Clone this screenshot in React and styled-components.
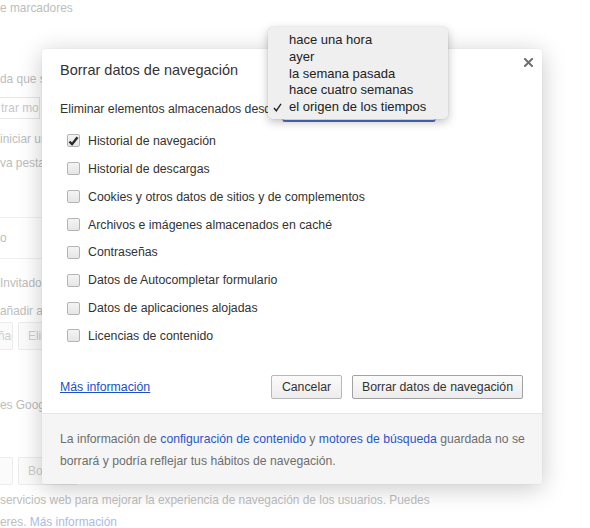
import React from "react";
import styled, { createGlobalStyle } from "styled-components";

const Global = createGlobalStyle`
  html, body { margin: 0; padding: 0; background: #fff; }
  body { font-family: "Liberation Sans", Arial, sans-serif; font-size: 12.3px; color: #333; overflow: hidden; }
  * { box-sizing: border-box; }
`;

const Page = styled.div`
  position: relative;
  width: 590px;
  height: 528px;
  overflow: hidden;
`;

const Bg = styled.div`
  display: flex;
  flex-direction: column;
  color: #bdbdbd;
  font-size: 11.9px;
`;

const BgText = styled.div`
  line-height: 16px;
  height: 16px;
  margin-top: ${(p) => p.$mt || 0}px;
  white-space: nowrap;
`;

const BgLink = styled.span`
  color: #a9bbe6;
`;

const BgInput = styled.div`
  margin-top: ${(p) => p.$mt || 0}px;
  margin-left: -20px;
  width: 60px;
  height: 22px;
  border: 1px solid #e6e6e6;
  padding-left: 20px;
  line-height: 20px;
  white-space: nowrap;
  overflow: hidden;
  color: #c8c8c8;
`;

const BgRule = styled.div`
  margin-top: ${(p) => p.$mt || 0}px;
  width: 42px;
  height: 1px;
  background: #f0f0f0;
`;

const BgButtons = styled.div`
  display: flex;
  gap: 5px;
  margin-top: ${(p) => p.$mt || 0}px;
  margin-left: -20px;
  height: ${(p) => p.$h}px;
`;

const BgButton = styled.div`
  width: ${(p) => p.$w}px;
  height: 100%;
  border: 1px solid #ececec;
  border-radius: 2px;
  background: #fbfbfb;
  color: #cdcdcd;
  padding-left: 9px;
  display: flex;
  align-items: center;
  white-space: nowrap;
  overflow: hidden;
`;

const Dialog = styled.div`
  position: absolute;
  left: 42px;
  top: 49px;
  width: 500px;
  height: 435px;
  background: #fff;
  border-radius: 3px;
  box-shadow: 0 4px 24px rgba(0, 0, 0, 0.22), 0 0 1px rgba(0, 0, 0, 0.15);
  display: flex;
  flex-direction: column;
  overflow: hidden;
`;

const Body = styled.div`
  flex: 1;
  display: flex;
  flex-direction: column;
  padding: 11px 19px 0 18px;
`;

const Header = styled.div`
  display: flex;
  justify-content: space-between;
  align-items: flex-start;
`;

const Title = styled.h1`
  margin: 0;
  font-size: 14.5px;
  font-weight: normal;
  line-height: 20px;
  color: #333;
`;

const Close = styled.button`
  border: 0;
  background: none;
  padding: 0;
  margin: -5px -12px 0 0;
  width: 14px;
  height: 14px;
  display: flex;
  align-items: center;
  justify-content: center;
  cursor: pointer;
`;

const RangeRow = styled.div`
  display: flex;
  align-items: center;
  gap: 4px;
  margin-top: 19px;
  height: 20px;
  line-height: 20px;
  white-space: nowrap;
`;

const Select = styled.div`
  width: 154px;
  height: 23px;
  border: 1px solid #c6c6c6;
  border-bottom: 2px solid #4a6fc3;
  border-radius: 3px;
  margin-top: 2px;
  background: #fff;
`;

const List = styled.div`
  display: flex;
  flex-direction: column;
  margin-top: 8px;
  padding-left: 7px;
`;

const Item = styled.label`
  display: flex;
  align-items: center;
  gap: 8px;
  height: 27.86px;
  line-height: 16px;
  color: #333;
  white-space: nowrap;
`;

const Box = styled.span`
  width: 13px;
  height: 13px;
  border: 1px solid #b4b4b4;
  border-radius: 2px;
  background: linear-gradient(#f4f4f4, #e6e6e6);
  display: flex;
  align-items: center;
  justify-content: center;
  flex: none;
`;

const Actions = styled.div`
  display: flex;
  align-items: center;
  margin-top: 25px;
  height: 24px;
`;

const MoreLink = styled.a`
  color: #1a4fc6;
  text-decoration: underline;
  margin-right: auto;
`;

const Button = styled.button`
  font-family: inherit;
  font-size: 12.3px;
  color: #333;
  height: 24px;
  width: ${(p) => p.$w}px;
  margin-left: ${(p) => p.$ml || 0}px;
  border: 1px solid ${(p) => (p.$dark ? "#a2a2a2" : "#b8b8b8")};
  border-radius: 2px;
  background: linear-gradient(#fbfbfb, #ececec);
  padding: 0;
  white-space: nowrap;
`;

const Footer = styled.div`
  height: 71px;
  background: #f5f5f5;
  border-top: 1px solid #e6e6e6;
  padding: 14px 10px 0 18px;
  color: #6e6e6e;
  font-size: 12.2px;
  line-height: 22px;
  white-space: nowrap;
`;

const FLink = styled.a`
  color: #2a55c8;
  text-decoration: none;
`;

const Menu = styled.div`
  position: absolute;
  left: 268px;
  top: 27px;
  width: 180px;
  height: 92px;
  background: rgba(239, 239, 239, 0.98);
  border-radius: 5px;
  box-shadow: 0 3px 10px rgba(0, 0, 0, 0.25), 0 0 1px rgba(0, 0, 0, 0.3);
  padding: 5px 0 0 21px;
  display: flex;
  flex-direction: column;
  font-size: 13px;
`;

const MenuItem = styled.div`
  position: relative;
  height: 16.8px;
  line-height: 16.8px;
  color: #222;
  white-space: nowrap;
`;

const MenuCheck = styled.svg`
  position: absolute;
  left: -16px;
  top: 4px;
`;

const items = [
  ["Historial de navegación", true],
  ["Historial de descargas", false],
  ["Cookies y otros datos de sitios y de complementos", false],
  ["Archivos e imágenes almacenados en caché", false],
  ["Contraseñas", false],
  ["Datos de Autocompletar formulario", false],
  ["Datos de aplicaciones alojadas", false],
  ["Licencias de contenido", false],
];

const menu = ["hace una hora", "ayer", "la semana pasada", "hace cuatro semanas", "el origen de los tiempos"];

export default function App() {
  return (
    <Page>
      <Global />
      <Bg>
        <BgText>e marcadores</BgText>
        <BgText $mt={55}>da que se inicia</BgText>
        <BgInput $mt={10}>trar motores</BgInput>
        <BgText $mt={12}>iniciar una sesión</BgText>
        <BgText $mt={8}>va pestaña</BgText>
        <BgRule $mt={46} />
        <BgText $mt={12}>o</BgText>
        <BgRule $mt={12} />
        <BgText $mt={16}>Invitado</BgText>
        <BgText $mt={12}>añadir a alguien</BgText>
        <BgButtons $mt={3} $h={28}>
          <BgButton $w={33}>Añadir</BgButton>
          <BgButton $w={60}>Eliminar</BgButton>
        </BgButtons>
        <BgText $mt={47}>es Google</BgText>
        <BgButtons $mt={44} $h={28}>
          <BgButton $w={33}>Ir</BgButton>
          <BgButton $w={60}>Borrar</BgButton>
        </BgButtons>
        <BgText $mt={7}>servicios web para mejorar la experiencia de navegación de los usuarios. Puedes</BgText>
        <BgText $mt={6}>
          eres. <BgLink>Más información</BgLink>
        </BgText>
      </Bg>

      <Dialog>
        <Body>
          <Header>
            <Title>Borrar datos de navegación</Title>
            <Close aria-label="Cerrar">
              <svg width="9" height="9" viewBox="0 0 9 9">
                <path d="M1 1L8 8M8 1L1 8" stroke="#6f6f6f" strokeWidth="2" strokeLinecap="square" />
              </svg>
            </Close>
          </Header>
          <RangeRow>
            <span>Eliminar elementos almacenados desde</span>
            <Select />
          </RangeRow>
          <List>
            {items.map(([label, checked]) => (
              <Item key={label}>
                <Box>
                  {checked && (
                    <svg width="11" height="10" viewBox="0 0 11 10">
                      <path d="M1.5 5.5L4 8.3L9.5 1.2" fill="none" stroke="#2b2b2b" strokeWidth="2.4" strokeLinejoin="round" />
                    </svg>
                  )}
                </Box>
                <span>{label}</span>
              </Item>
            ))}
          </List>
          <Actions>
            <MoreLink href="#">Más información</MoreLink>
            <Button $w={71}>Cancelar</Button>
            <Button $w={171} $ml={10} $dark>Borrar datos de navegación</Button>
          </Actions>
        </Body>
        <Footer>
          La información de <FLink href="#">configuración de contenido</FLink> y{" "}
          <FLink href="#">motores de búsqueda</FLink> guardada no se
          <br />
          borrará y podría reflejar tus hábitos de navegación.
        </Footer>
      </Dialog>

      <Menu>
        {menu.map((m, i) => (
          <MenuItem key={m}>
            {i === menu.length - 1 && (
              <MenuCheck width="9" height="9" viewBox="0 0 9 9">
                <path d="M1 5L3.3 7.8L8 0.8" fill="none" stroke="#222" strokeWidth="1.4" />
              </MenuCheck>
            )}
            {m}
          </MenuItem>
        ))}
      </Menu>
    </Page>
  );
}
